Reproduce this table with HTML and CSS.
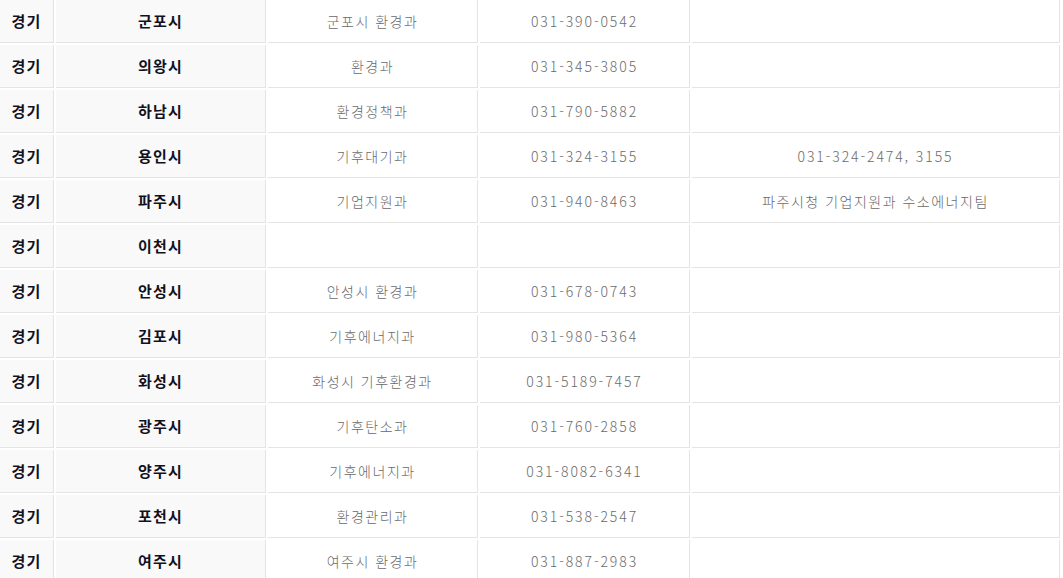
FILE: index.html
```html
<!DOCTYPE html>
<html lang="ko">
<head>
<meta charset="utf-8">
<title>지자체 담당부서</title>
<link rel="stylesheet" href="styles.css">
</head>
<body>
<div class="wrap">
<table class="list">
<colgroup>
<col class="c-region"><col class="c-city"><col class="c-dept"><col class="c-tel"><col class="c-note">
</colgroup>
<tbody>
<tr><th class="region">경기</th><th class="city">군포시</th><td>군포시 환경과</td><td class="tel">031-390-0542</td><td class="note"></td></tr>
<tr><th class="region">경기</th><th class="city">의왕시</th><td>환경과</td><td class="tel">031-345-3805</td><td class="note"></td></tr>
<tr><th class="region">경기</th><th class="city">하남시</th><td>환경정책과</td><td class="tel">031-790-5882</td><td class="note"></td></tr>
<tr><th class="region">경기</th><th class="city">용인시</th><td>기후대기과</td><td class="tel">031-324-3155</td><td class="note tel-note">031-324-2474, 3155</td></tr>
<tr><th class="region">경기</th><th class="city">파주시</th><td>기업지원과</td><td class="tel">031-940-8463</td><td class="note">파주시청 기업지원과 수소에너지팀</td></tr>
<tr><th class="region">경기</th><th class="city">이천시</th><td></td><td class="tel"></td><td class="note"></td></tr>
<tr><th class="region">경기</th><th class="city">안성시</th><td>안성시 환경과</td><td class="tel">031-678-0743</td><td class="note"></td></tr>
<tr><th class="region">경기</th><th class="city">김포시</th><td>기후에너지과</td><td class="tel">031-980-5364</td><td class="note"></td></tr>
<tr><th class="region">경기</th><th class="city">화성시</th><td>화성시 기후환경과</td><td class="tel">031-5189-7457</td><td class="note"></td></tr>
<tr><th class="region">경기</th><th class="city">광주시</th><td>기후탄소과</td><td class="tel">031-760-2858</td><td class="note"></td></tr>
<tr><th class="region">경기</th><th class="city">양주시</th><td>기후에너지과</td><td class="tel">031-8082-6341</td><td class="note"></td></tr>
<tr><th class="region">경기</th><th class="city">포천시</th><td>환경관리과</td><td class="tel">031-538-2547</td><td class="note"></td></tr>
<tr><th class="region">경기</th><th class="city">여주시</th><td>여주시 환경과</td><td class="tel">031-887-2983</td><td class="note"></td></tr>
</tbody>
</table>
</div>
</body>
</html>
```
FILE: styles.css
```css
html, body {
  margin: 0;
  padding: 0;
  background: #fff;
}
.wrap {
  width: 1063px;
  height: 578px;
  overflow: hidden;
}
.list {
  border-collapse: separate;
  border-spacing: 2px;
  margin: -2px 0 0 -2px;
  width: 1064px;
  table-layout: fixed;
  font-family: "Noto Sans CJK KR", "Noto Sans", sans-serif;
  font-size: 14px;
  letter-spacing: 1.5px;
}
.c-region { width: 54px; }
.c-city { width: 210px; }
.c-dept { width: 210px; }
.c-tel { width: 210px; }
.c-note { width: auto; }
.list th, .list td {
  height: 43px;
  padding: 0;
  text-align: center;
  vertical-align: middle;
  border-right: 1px solid #e4e4e4;
  border-bottom: 1px solid #e4e4e4;
  box-sizing: border-box;
  line-height: 20px;
}
.list th {
  background: #f9f9f9;
  color: #111122;
  font-size: 15px;
  font-weight: 700;
  letter-spacing: 1.2px;
}
.list td {
  background: #fff;
  color: #6a6a6a;
  font-weight: 300;
}
.list td.tel {
  letter-spacing: 1.9px;
}
.list td.tel-note {
  letter-spacing: 1.9px;
}
```
